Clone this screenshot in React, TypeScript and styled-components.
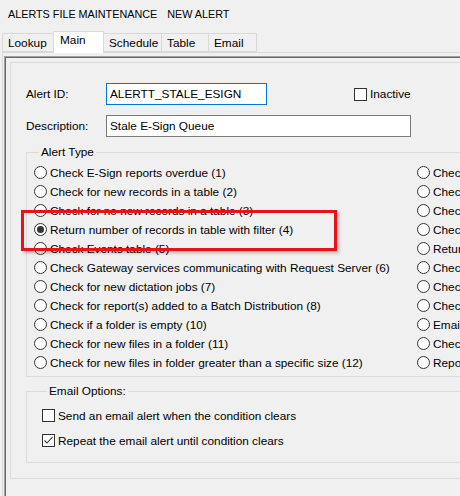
import React from 'react';
import styled, { createGlobalStyle } from 'styled-components';

const GlobalStyle = createGlobalStyle`
  html, body {
    margin: 0;
    padding: 0;
    background: #f0f0f0;
  }
  body {
    font-family: 'Liberation Sans', Arial, sans-serif;
    font-size: 11.8px;
    color: #000;
    overflow: hidden;
  }
`;

const leftOptions = [
  'Check E-Sign reports overdue (1)',
  'Check for new records in a table (2)',
  'Check for no new records in a table (3)',
  'Return number of records in table with filter (4)',
  'Check Events table (5)',
  'Check Gateway services communicating with Request Server (6)',
  'Check for new dictation jobs (7)',
  'Check for report(s) added to a Batch Distribution (8)',
  'Check if a folder is empty (10)',
  'Check for new files in a folder (11)',
  'Check for new files in folder greater than a specific size (12)',
];

const rightOptions = [
  'Check for unsigned reports (9)',
  'Check for failed interfaces (13)',
  'Check for pending orders (14)',
  'Check for locked records (15)',
  'Return result of a SQL query (16)',
  'Check disk space on a drive (17)',
  'Check for stalled print queue (18)',
  'Check service status (19)',
  'Email a report summary (20)',
  'Check for HL7 messages in error (21)',
  'Report on user activity (22)',
];

const SELECTED = 3;

export default function App() {
  return (
    <Window>
      <GlobalStyle />
      <TitleBar>
        <span>ALERTS FILE MAINTENANCE</span>
        <span>NEW ALERT</span>
      </TitleBar>
      <TabStrip>
        <Tab $width={52}>Lookup</Tab>
        <Tab $width={51} $active>Main</Tab>
        <Tab $width={59}>Schedule</Tab>
        <Tab $width={48}>Table</Tab>
        <Tab $width={49}>Email</Tab>
      </TabStrip>
      <TabPanel>
        <Frame>
          <InnerPanel>
            <FieldRow>
              <FieldLabel>Alert ID:</FieldLabel>
              <TextBox $width={161} $focused readOnly value="ALERTT_STALE_ESIGN" />
              <InactiveCheck>
                <CheckBox />
                <span>Inactive</span>
              </InactiveCheck>
            </FieldRow>
            <FieldRow $mt={10}>
              <FieldLabel>Description:</FieldLabel>
              <TextBox $width={305} readOnly value="Stale E-Sign Queue" />
            </FieldRow>

            <GroupBox $mt={8} $pad="3px 0 4px 7px">
              <Caption>Alert Type</Caption>
              <OptionGrid>
                {leftOptions.map((text, i) => (
                  <Option key={text}>
                    <Radio $checked={i === SELECTED} />
                    <span>{text}</span>
                  </Option>
                ))}
                {rightOptions.map((text) => (
                  <Option key={text}>
                    <Radio />
                    <span>{text}</span>
                  </Option>
                ))}
              </OptionGrid>
            </GroupBox>

            <GroupBox $mt={7} $pad="7px 0 12px 15px">
              <Caption>Email Options:</Caption>
              <CheckList>
                <Option>
                  <CheckBox />
                  <span>Send an email alert when the condition clears</span>
                </Option>
                <Option>
                  <CheckBox>
                    <svg width="11" height="11" viewBox="0 0 11 11">
                      <polyline
                        points="1.5,5.5 4,8 9.5,2"
                        fill="none"
                        stroke="#333"
                        strokeWidth="1.1"
                      />
                    </svg>
                  </CheckBox>
                  <span>Repeat the email alert until condition clears</span>
                </Option>
              </CheckList>
            </GroupBox>

            <Highlight />
          </InnerPanel>
        </Frame>
      </TabPanel>
    </Window>
  );
}

const Window = styled.div`
  width: 460px;
  height: 496px;
  overflow: hidden;
  background: #f0f0f0;
`;

const TitleBar = styled.div`
  height: 27px;
  display: flex;
  align-items: center;
  gap: 10px;
  padding-left: 8px;
  font-size: 10.8px;
`;

const TabStrip = styled.div`
  height: 25px;
  display: flex;
  align-items: flex-end;
  padding-left: 2px;
`;

const Tab = styled.div<{ $width: number; $active?: boolean }>`
  box-sizing: border-box;
  width: ${(p) => p.$width}px;
  height: ${(p) => (p.$active ? 22 : 19)}px;
  margin-right: -1px;
  margin-bottom: ${(p) => (p.$active ? -1 : 0)}px;
  position: relative;
  z-index: ${(p) => (p.$active ? 1 : 0)};
  padding: ${(p) => (p.$active ? '2px 0 0 6px' : '3px 0 0 5px')};
  line-height: 13px;
  background: ${(p) => (p.$active ? '#fff' : '#f0f0f0')};
  border: 1px solid #d9d9d9;
  border-bottom: ${(p) => (p.$active ? 'none' : '1px solid #d9d9d9')};
`;

const TabPanel = styled.div`
  margin-left: 2px;
  padding: 3px 0 0 1px;
  border-top: 1px solid #d9d9d9;
  border-left: 1px solid #d9d9d9;
`;

const Frame = styled.div`
  min-height: 440px;
  padding: 5px 0 0 5px;
  border-top: 1px solid #a0a0a0;
  border-left: 1px solid #a0a0a0;
  box-shadow: inset 1px 1px 0 #696969;
`;

const InnerPanel = styled.div`
  position: relative;
  width: 700px;
  padding: 20px 0 15px 15px;
  border: 1px solid #dcdcdc;
`;

const FieldRow = styled.div<{ $mt?: number }>`
  display: flex;
  align-items: center;
  height: 22px;
  margin-top: ${(p) => p.$mt ?? 0}px;
`;

const FieldLabel = styled.span`
  width: 80px;
`;

const TextBox = styled.input<{ $width: number; $focused?: boolean }>`
  box-sizing: border-box;
  width: ${(p) => p.$width}px;
  height: 22px;
  margin: 0;
  padding: 0 3px;
  font: inherit;
  color: #000;
  background: #fff;
  border: 1px solid ${(p) => (p.$focused ? '#0078d7' : '#7a7a7a')};
  border-radius: 0;
  outline: none;
`;

const InactiveCheck = styled.label`
  display: flex;
  align-items: center;
  gap: 3px;
  margin-left: 87px;
`;

const CheckBox = styled.span`
  box-sizing: border-box;
  width: 13px;
  height: 13px;
  flex: none;
  display: flex;
  align-items: center;
  justify-content: center;
  background: #fff;
  border: 1px solid #333;
`;

const GroupBox = styled.fieldset<{ $mt: number; $pad: string }>`
  box-sizing: border-box;
  width: 640px;
  min-width: 0;
  margin: ${(p) => p.$mt}px 0 0 0;
  padding: ${(p) => p.$pad};
  border: 1px solid #dcdcdc;
`;

const Caption = styled.legend`
  margin-left: 5px;
  padding: 0 2px;
  line-height: 15px;
`;

const OptionGrid = styled.div`
  display: grid;
  grid-template-columns: 383px 1fr;
  grid-template-rows: repeat(11, 19px);
  grid-auto-flow: column;
`;

const CheckList = styled.div`
  display: flex;
  flex-direction: column;
  gap: 6px;
`;

const Option = styled.label`
  display: flex;
  align-items: center;
  gap: 3px;
  height: 19px;
  white-space: nowrap;
`;

const Radio = styled.span<{ $checked?: boolean }>`
  box-sizing: border-box;
  width: 13px;
  height: 13px;
  flex: none;
  display: flex;
  align-items: center;
  justify-content: center;
  border-radius: 50%;
  background: #fff;
  border: 1px solid #333;

  &::after {
    content: '';
    display: ${(p) => (p.$checked ? 'block' : 'none')};
    width: 7px;
    height: 7px;
    border-radius: 50%;
    background: #333;
  }
`;

const Highlight = styled.div`
  position: absolute;
  left: 10px;
  top: 147px;
  width: 316px;
  height: 41px;
  box-sizing: border-box;
  border: 3px solid #e8121b;
  box-shadow: 2px 2px 3px rgba(0, 0, 0, 0.25);
  pointer-events: none;
`;
